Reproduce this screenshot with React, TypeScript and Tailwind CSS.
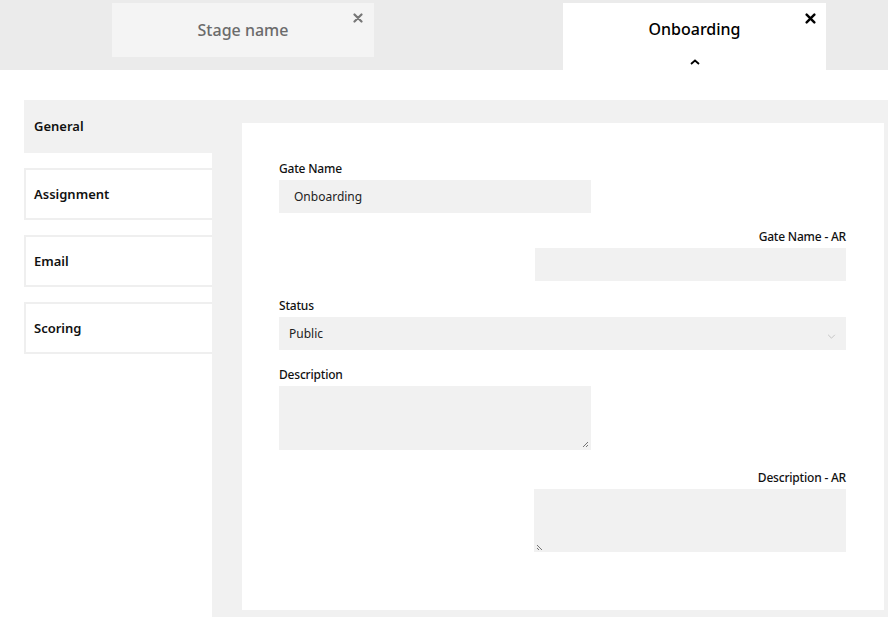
import { useState } from 'react'

const font = { fontFamily: '"Noto Sans", "Liberation Sans", sans-serif' }

const sideTabs = ['General', 'Assignment', 'Email', 'Scoring']

function CloseIcon({ className }: { className: string }) {
  return (
    <svg viewBox="0 0 10 10" className={className}>
      <path d="M1.5 1.5 L8.5 8.5 M8.5 1.5 L1.5 8.5" stroke="currentColor" strokeWidth="2.2" strokeLinecap="round" />
    </svg>
  )
}

function Label({ children, right }: { children: string; right?: boolean }) {
  return (
    <div className={`h-4 text-[12px] leading-4 font-medium tracking-[-0.2px] text-[#111] mb-1 pt-[1px] ${right ? 'text-right' : ''}`}>
      {children}
    </div>
  )
}

export default function App() {
  const [active, setActive] = useState('General')

  return (
    <div className="w-[888px] h-[617px] bg-white overflow-hidden" style={font}>
      {/* stage tabs */}
      <div className="h-[70px] bg-[#ebebeb] flex items-start pt-[3px] pl-[112px] gap-[189px]">
        <div className="relative w-[262px] h-[54px] bg-[#f4f4f4] flex justify-center pt-[17px]">
          <span className="text-[16px] leading-5 font-medium text-[#6b6b6b]">Stage name</span>
          <CloseIcon className="absolute right-[11px] top-[10px] w-[10px] h-[10px] text-[#777]" />
        </div>
        <div className="relative w-[263px] h-[67px] bg-white flex flex-col items-center pt-[16px]">
          <span className="text-[16px] leading-5 font-medium text-black">Onboarding</span>
          <svg viewBox="0 0 10 6" className="w-[10px] h-[6px] mt-[20px]">
            <path d="M1 5 L5 1.5 L9 5" stroke="black" strokeWidth="1.8" fill="none" />
          </svg>
          <CloseIcon className="absolute right-[10px] top-[10px] w-[11px] h-[11px] text-black" />
        </div>
      </div>

      <div className="flex pl-[24px] pt-[30px]">
        {/* side nav */}
        <div className="w-[188px] flex flex-col">
          {sideTabs.map((t) =>
            t === active ? (
              <button
                key={t}
                onClick={() => setActive(t)}
                className="h-[53px] bg-[#f1f1f1] text-left pl-[10px] text-[13px] font-semibold text-[#111]"
              >
                {t}
              </button>
            ) : (
              <button
                key={t}
                onClick={() => setActive(t)}
                className="h-[52px] mt-[15px] bg-white border-2 border-r-0 border-[#efefef] text-left pl-[8px] pt-[2px] text-[13px] font-semibold text-[#111]"
              >
                {t}
              </button>
            )
          )}
        </div>

        {/* form panel */}
        <div className="flex-1 h-[517px] bg-[#f1f1f1] pt-[23px] pl-[30px] pr-[4px] pb-[7px]">
          <div className="h-full bg-white pt-[37px] pl-[37px] pr-[38px]">
            <div className="w-[312px] mb-[15px]">
              <Label>Gate Name</Label>
              <div className="h-[33px] bg-[#f1f1f1] pl-[15px] pt-[1px] flex items-center text-[12px] text-[#222]">Onboarding</div>
            </div>

            <div className="w-[311px] ml-auto mb-4">
              <Label right>Gate Name - AR</Label>
              <div className="h-[33px] bg-[#f1f1f1]" />
            </div>

            <div className="mb-4">
              <Label>Status</Label>
              <div className="h-[33px] bg-[#f1f1f1] pl-[10px] pr-[10px] pt-[1px] flex items-center justify-between text-[12px] text-[#222]">
                <span>Public</span>
                <svg viewBox="0 0 10 6" className="w-[9px] h-[5px] mt-[4px]">
                  <path d="M1 1 L5 5 L9 1" stroke="#bbb" strokeWidth="1" fill="none" />
                </svg>
              </div>
            </div>

            <div className="w-[312px] mb-[19px]">
              <Label>Description</Label>
              <div className="relative h-[64px] bg-[#f1f1f1]">
                <svg viewBox="0 0 8 8" className="absolute right-[2px] bottom-[2px] w-[8px] h-[8px]">
                  <path d="M7 2 L2 7 M7 5 L5 7" stroke="#555" strokeWidth="0.8" />
                </svg>
              </div>
            </div>

            <div className="w-[312px] ml-auto">
              <Label right>Description - AR</Label>
              <div className="relative h-[63px] bg-[#f1f1f1]">
                <svg viewBox="0 0 8 8" className="absolute left-[2px] bottom-[1px] w-[8px] h-[8px]">
                  <path d="M1 2 L6 7 M1 5 L3 7" stroke="#555" strokeWidth="0.8" />
                </svg>
              </div>
            </div>
          </div>
        </div>
      </div>
    </div>
  )
}
